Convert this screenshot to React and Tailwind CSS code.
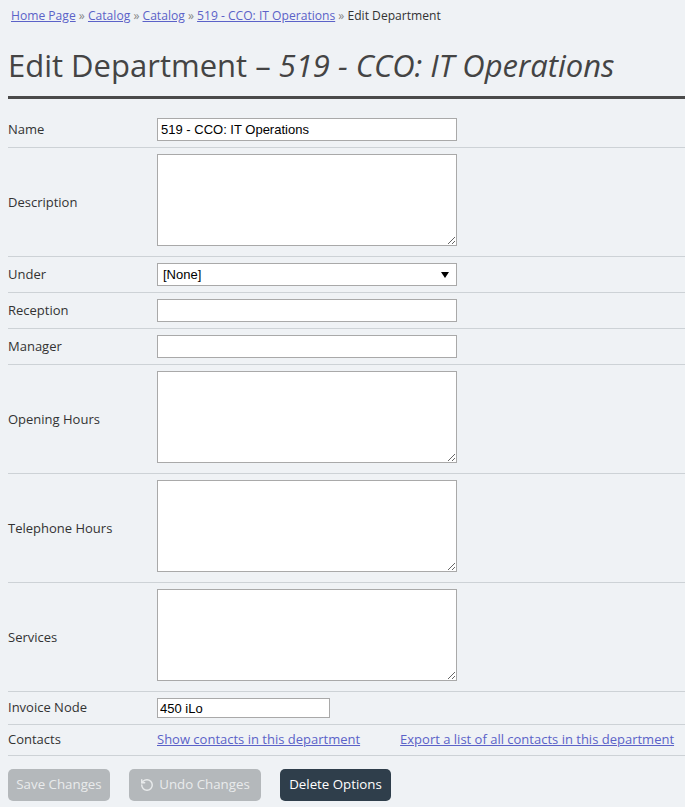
import { RotateCcw } from 'lucide-react';

const font = { fontFamily: '"Open Sans", "Liberation Sans", sans-serif' };

const Row = ({ label, children, tall }) => (
  <div className={`flex items-center border-b border-[#cdd2d6] pt-[6px] ${tall ? 'pb-[10px]' : 'pb-[6px]'}`}>
    <div className={`w-[149px] shrink-0 text-[13px] text-[#333] ${tall ? 'mt-[6px]' : ''}`}>{label}</div>
    {children}
  </div>
);

const inputCls =
  'block h-[23px] w-[300px] border border-[#a9a9a9] bg-white px-[3px] text-[13px] text-black outline-none font-["Liberation_Sans",Arial,sans-serif]';
const areaCls = 'block h-[92px] w-[300px] border border-[#a9a9a9] bg-white outline-none';

const App = () => {
  return (
    <div className="min-h-[807px] bg-[#eff2f5] pl-2" style={font}>
      <div className="pl-[3px] pt-[7px] text-[12.1px] leading-[18px] text-[#333]">
        <a href="#" className="text-[#5b62c8] underline">Home Page</a>
        <span className="text-[#888]"> » </span>
        <a href="#" className="text-[#5b62c8] underline">Catalog</a>
        <span className="text-[#888]"> » </span>
        <a href="#" className="text-[#5b62c8] underline">Catalog</a>
        <span className="text-[#888]"> » </span>
        <a href="#" className="text-[#5b62c8] underline">519 - CCO: IT Operations</a>
        <span className="text-[#888]"> » </span>
        <span>Edit Department</span>
      </div>

      <h1 className="mt-[19px] border-b-[3px] border-[#4a4a4a] pb-[10px] text-[31px] leading-[42px] text-[#444]">
        Edit Department – <i>519 - CCO: IT Operations</i>
      </h1>

      <div className="pt-[13px]">
        <Row label="Name">
          <input className={inputCls} defaultValue="519 - CCO: IT Operations" />
        </Row>
        <Row label="Description" tall>
          <textarea className={areaCls} />
        </Row>
        <Row label="Under">
          <div className="relative flex h-[23px] w-[300px] items-center border border-[#a9a9a9] bg-white px-[5px] text-[13px] text-black font-['Liberation_Sans',Arial,sans-serif]">
            [None]
            <svg className="absolute right-[7px] top-[8px]" width="8" height="6" viewBox="0 0 8 6">
              <path d="M0 0 L8 0 L4 6 Z" fill="#000" />
            </svg>
          </div>
        </Row>
        <Row label="Reception">
          <input className={inputCls} />
        </Row>
        <Row label="Manager">
          <input className={inputCls} />
        </Row>
        <Row label="Opening Hours" tall>
          <textarea className={areaCls} />
        </Row>
        <Row label="Telephone Hours" tall>
          <textarea className={areaCls} />
        </Row>
        <Row label="Services" tall>
          <textarea className={areaCls} />
        </Row>
        <Row label="Invoice Node">
          <input
            className="block h-[20px] w-[173px] border border-[#a9a9a9] bg-white px-[2px] text-[13px] text-black outline-none font-['Liberation_Sans',Arial,sans-serif]"
            defaultValue="450 iLo"
          />
        </Row>
        <div className="flex h-[31px] items-center border-b border-[#cdd2d6] text-[13px]">
          <div className="w-[149px] shrink-0 text-[#333]">Contacts</div>
          <a href="#" className="text-[#5b62c8] underline">Show contacts in this department</a>
          <a href="#" className="ml-[40px] text-[#5b62c8] underline">Export a list of all contacts in this department</a>
        </div>
      </div>

      <div className="flex gap-[19px] pt-[13px]">
        <button className="h-[32px] w-[102px] rounded-[5px] bg-[#b4b8bb] text-[13.3px] text-[#e9ebec]">Save Changes</button>
        <button className="flex h-[32px] w-[132px] items-center justify-center gap-[5px] rounded-[5px] bg-[#b4b8bb] text-[13.3px] text-[#e9ebec]">
          <RotateCcw size={14} strokeWidth={2.5} />
          Undo Changes
        </button>
        <button className="h-[32px] w-[111px] rounded-[5px] bg-[#2f3e4b] text-[13.3px] text-white">Delete Options</button>
      </div>
    </div>
  );
};

export default App;
